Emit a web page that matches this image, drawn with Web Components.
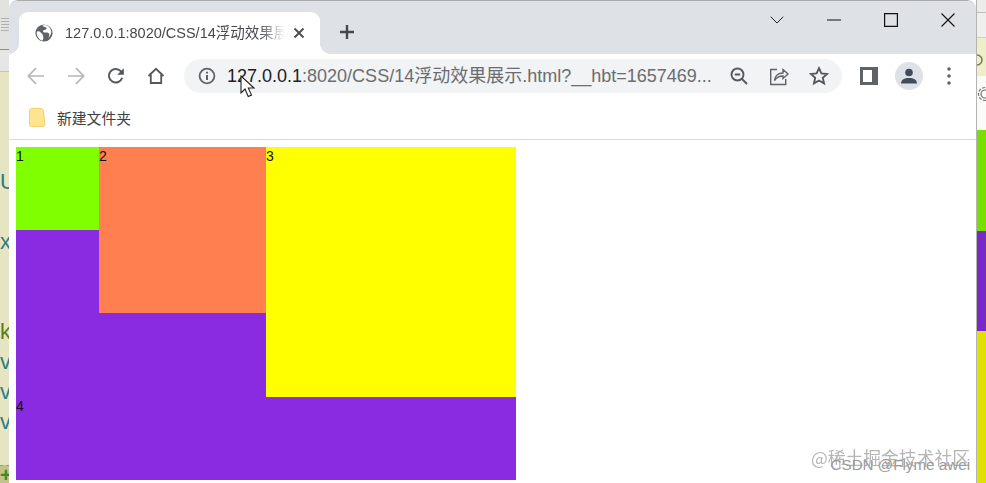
<!DOCTYPE html>
<html lang="zh">
<head>
<meta charset="utf-8">
<title>14浮动效果展示</title>
<style>
    html, body { margin: 0; padding: 0; background: #fff; overflow: hidden; }
    body { font-family: "Liberation Sans", "Noto Sans CJK SC", sans-serif; }
</style>
</head>
<body>

<desk-top>
    <side-strip slot="left"></side-strip>
    <browser-window slot="main">
        <tab-strip title-text="127.0.0.1:8020/CSS/14浮动效果展示"></tab-strip>
        <tool-bar host-text="127.0.0.1" rest-text=":8020/CSS/14浮动效果展示.html?__hbt=1657469..."></tool-bar>
        <bookmark-bar>新建文件夹</bookmark-bar>
        <page-view>
            <float-box style="--w:83px;--h:83px;--bg:#7fff00;float:left">1</float-box>
            <float-box style="--w:167px;--h:166px;--bg:#ff7f50;float:left">2</float-box>
            <float-box style="--w:250px;--h:250px;--bg:#ffff00;float:left">3</float-box>
            <float-box style="--w:500px;--h:333px;--bg:#8a2be2">4</float-box>
        </page-view>
    </browser-window>
    <other-window slot="right"></other-window>
    <water-mark slot="over"></water-mark>
</desk-top>

<template id="tpl-desk-top">
    <style>
        :host { display: block; position: relative; width: 986px; height: 483px; overflow: hidden; }
        .row { display: grid; grid-template-columns: 9px 967px 10px; height: 100%; }
    </style>
    <div class="row">
        <slot name="left"></slot>
        <slot name="main"></slot>
        <slot name="right"></slot>
    </div>
    <slot name="over"></slot>
</template>

<template id="tpl-side-strip">
    <style>
        :host { display: flex; flex-direction: column; height: 483px; overflow: hidden; background: #e5e5c3; }
        .head { height: 49px; background: #e2e2e0; border-bottom: 1px solid #8f8f8f; display: flex; justify-content: flex-end; align-items: center; }
        .sub { height: 21px; background: #e6e6e6; border-bottom: 1px solid #c4c4c4; }
        .code { flex: 1; padding-top: 95px; font: 22px/30px "Liberation Sans", sans-serif; color: #2d7d80; }
        .code div { height: 30px; white-space: pre; }
        .k { color: #5f7a10; }
        .foot { height: 17px; border-top: 1px dashed #9a9a80; background: #c2c28c; color: #3f8a1c; font: bold 20px/18px "Liberation Sans", sans-serif; text-align: right; overflow: hidden; }
        .lines { width: 8px; height: 14px; background: repeating-linear-gradient(#b0b0b0 0 1px, transparent 1px 3px); }
    </style>
    <div class="head"><div class="lines"></div></div>
    <div class="sub"></div>
    <div class="code">
        <div>U</div>
        <div> </div>
        <div>x</div>
        <div> </div>
        <div> </div>
        <div class="k">k</div>
        <div>v</div>
        <div>v</div>
        <div>v</div>
    </div>
    <div class="foot">+</div>
</template>

<template id="tpl-other-window">
    <style>
        :host { display: flex; flex-direction: column; height: 483px; overflow: hidden; background: #fff; border-left: 1px solid #b5b5b0; box-sizing: border-box; }
        .a { height: 12px; background: #ececec; border-bottom: 1px solid #bdbdbd; flex: none; }
        .b { height: 24px; background: #efefef; border-bottom: 1px solid #cfcfcf; flex: none; }
        .c { height: 38px; background: #eeeec8; flex: none; }
        .c svg { margin: 16px 0 0 -6px; }
        .d { height: 54px; background: #fbfbfb; flex: none; }
        .d svg { display: block; margin: 10px 0 0 0; }
        svg { display: block; }
        .green { height: 101px; background: #78e000; flex: none; }
        .purple { height: 100px; background: #7a28c8; flex: none; }
        .yellow { flex: 1; background: #e2e000; }
    </style>
    <div class="a"></div>
    <div class="b"></div>
    <div class="c">
        <svg width="12" height="12" viewBox="0 0 12 12" fill="none" stroke="#77775a" stroke-width="1.500"><circle cx="6" cy="6" r="5"/></svg>
    </div>
    <div class="d">
        <svg width="16" height="16" viewBox="0 0 16 16" fill="none" stroke="#777" stroke-width="1.200"><circle cx="8" cy="8" r="4"/><circle cx="8" cy="8" r="6.500" stroke-dasharray="3 1.500"/></svg>
    </div>
    <div class="green"></div>
    <div class="purple"></div>
    <div class="yellow"></div>
</template>

<template id="tpl-browser-window">
    <style>
        :host {
            display: flex; flex-direction: column; height: 483px; overflow: hidden;
            background: #fff; border-radius: 9px 9px 0 0; box-sizing: border-box;
            border-top: 1px solid #a9abae;
        }
    </style>
    <slot></slot>
</template>

<template id="tpl-tab-strip">
    <style>
        :host { display: flex; height: 53px; flex: none; background: #dee1e6; padding-left: 10px; box-sizing: border-box; color: #45484d; }
        .tab {
            position: relative; width: 301px; height: 42px; margin-top: 11px; background: #fff;
            border-radius: 9px 9px 0 0; display: flex; align-items: center; box-sizing: border-box;
            padding: 0 0 0 16px;
        }
        .tab::before, .tab::after { content: ""; position: absolute; bottom: 0; width: 10px; height: 10px; }
        .tab::before { left: -10px; background: radial-gradient(circle at 0 0, transparent 9.500px, #fff 10px); }
        .tab::after { right: -10px; background: radial-gradient(circle at 100% 0, transparent 9.500px, #fff 10px); }
        .title {
            margin-left: 12px; width: 220px; overflow: hidden; white-space: nowrap; font-size: 14.500px; line-height: 20px;
            -webkit-mask-image: linear-gradient(90deg, #000 88%, transparent 100%);
        }
        .x { margin-left: 7px; display: block; }
        .plus { margin: 17px 0 0 13px; width: 28px; height: 28px; display: block; flex: none; }
        .controls { margin-left: auto; display: flex; }
        .controls span { width: 57px; height: 38px; display: flex; align-items: center; justify-content: center; }
        svg { display: block; flex: none; }
    </style>
    <div class="tab">
        <svg width="18" height="18" viewBox="0 0 18 18"><circle cx="9" cy="9" r="8.600" fill="#5f6368"/><path d="M2.200 7.400c1.600-.4 3 .2 3.700 1.400.6 1 1.900 1 1.900 2.200 0 1 .8 1.600.6 3.200-.1.900-.6 1.900-1.200 2.500C4 15.600 1.400 12 1.700 8.500zM7.500 1.700c1.300.5 1.700 1.400 3 1.500 1.200.1 1.500 1.400.5 2.100-1 .8-2.400.4-2.900 1.600-.3 1 1 1.700 2.300 1.600 1.600-.1 3.300.2 3.800 1.400.4 1-.3 2.700-1.200 4.100 2.400-1.500 3.500-4.300 3.200-6.900-.4-3.300-3-5.700-6-6.200-1-.1-1.800 0-2.700.8z" fill="#fff"/></svg>
        <span class="title" id="title"></span>
        <svg class="x" width="14" height="14" viewBox="0 0 14 14" fill="none" stroke="#4b4e53" stroke-width="1.900"><path d="M2.500 2.500l9 9M11.500 2.500l-9 9"/></svg>
    </div>
    <svg class="plus" viewBox="0 0 28 28" fill="none" stroke="#45484d" stroke-width="2.400"><path d="M14 7v14M7 14h14"/></svg>
    <div class="controls">
        <span><svg width="14" height="8" viewBox="0 0 14 8" fill="none" stroke="#222" stroke-width="1"><path d="M.7.700L7 7l6.300-6.300"/></svg></span>
        <span><svg width="14" height="2" viewBox="0 0 14 2" stroke="#111" stroke-width="1.200"><path d="M0 1h14"/></svg></span>
        <span><svg width="14" height="14" viewBox="0 0 14 14" fill="none" stroke="#111" stroke-width="1.200"><path d="M.6.600h12.800v12.800H.6z"/></svg></span>
        <span><svg width="14" height="14" viewBox="0 0 14 14" fill="none" stroke="#111" stroke-width="1.100"><path d="M.5.500l13 13M13.500.5l-13 13"/></svg></span>
    </div>
</template>

<template id="tpl-tool-bar">
    <style>
        :host { display: flex; flex: none; height: 46px; padding: 5px 7px 0; box-sizing: border-box; background: #fff; align-items: flex-start; }
        .btn { width: 40px; height: 34px; display: flex; align-items: center; justify-content: center; flex: none; }
        svg { display: block; flex: none; }
        .omni {
            position: relative; flex: none; width: 658px; height: 34px; margin-left: 8px; background: #f1f3f4; border-radius: 17px;
            display: flex; align-items: center; padding-left: 14px; box-sizing: border-box;
        }
        .url { margin-left: 11px; width: 500px; overflow: hidden; white-space: nowrap; font-size: 18px; line-height: 22px; color: #6a6d71; }
        .url b { font-weight: normal; color: #202124; }
        .tail { margin-left: auto; display: flex; padding-right: 3px; }
        .tail span { width: 40px; height: 34px; display: flex; align-items: center; justify-content: center; }
        .cursor { position: absolute; left: 56px; top: 16px; }
        .after { display: flex; margin-left: 7px; }
        .avatar { width: 28px; height: 28px; border-radius: 50%; background: #dee1e6; display: flex; align-items: center; justify-content: center; }
    </style>
    <span class="btn"><svg width="18" height="18" viewBox="0 0 18 18" fill="none" stroke="#b4b7bb" stroke-width="1.700"><path d="M17 9H1.500M9 1.200L1.300 9 9 16.800"/></svg></span>
    <span class="btn"><svg width="18" height="18" viewBox="0 0 18 18" fill="none" stroke="#b4b7bb" stroke-width="1.700"><path d="M1 9h15.500M9 1.200L16.700 9 9 16.800"/></svg></span>
    <span class="btn"><svg width="18" height="18" viewBox="0 0 18 18" fill="none" stroke="#55585d" stroke-width="2"><path d="M15.200 10.800A6.800 6.800 0 1 1 13.800 4.200L16 6.500"/><path d="M16.800 1.200v6.600h-6.600" stroke="none" fill="#55585d"/></svg></span>
    <span class="btn"><svg width="18" height="18" viewBox="0 0 18 18" fill="none" stroke="#55585d" stroke-width="1.800"><path d="M1.500 9L9 1.800 16.500 9M3.800 7.200V16h10.400V7.200"/></svg></span>
    <div class="omni">
        <svg width="18" height="18" viewBox="0 0 18 18" fill="none" stroke="#5f6368" stroke-width="1.800"><circle cx="9" cy="9" r="7.400"/><path d="M9 8v5M9 4.800v1.700" stroke-width="2"/></svg>
        <span class="url"><b id="host"></b><span id="rest"></span></span>
        <div class="tail">
            <span><svg width="20" height="20" viewBox="0 0 20 20" fill="none" stroke="#55585d" stroke-width="1.900"><circle cx="8.500" cy="8.500" r="6"/><path d="M13 13l5 5M5.800 8.500h5.400"/></svg></span>
            <span><svg width="20" height="20" viewBox="0 0 20 20" fill="none" stroke="#5f6368" stroke-width="1.400"><path d="M8 3.500H1.700v15h15V13"/><path d="M5.500 14.500c.4-4.500 3.700-7.500 8.500-7.500V3.500L19 8l-5 4.500V10c-3.500 0-6.500 1.500-8.500 4.500z"/></svg></span>
            <span><svg width="20" height="20" viewBox="0 0 20 20" fill="none" stroke="#55585d" stroke-width="1.900"><path d="M10 2.200l2.400 5.200 5.700.6-4.300 3.800 1.200 5.600-5-2.900-5 2.900 1.200-5.600L1.900 8l5.700-.6z"/></svg></span>
        </div>
        <svg class="cursor" width="16" height="23" viewBox="0 0 16 23"><path d="M1 1v17l4-4 3.200 7.500 3.300-1.400L8.300 13H14z" fill="#fff" stroke="#222" stroke-width="1.100"/></svg>
    </div>
    <div class="after">
        <span class="btn"><svg width="18" height="18" viewBox="0 0 18 18"><path d="M0 0h18v18H0z" fill="#5f6368"/><path d="M3 3h9v12H3z" fill="#fff"/></svg></span>
        <span class="btn"><span class="avatar"><svg width="16" height="16" viewBox="0 0 16 16" fill="#414b5c"><circle cx="8" cy="4.500" r="3.800"/><path d="M0 15.500c0-3.800 3.600-5.500 8-5.500s8 1.700 8 5.500z"/></svg></span></span>
        <span class="btn"><svg width="4" height="18" viewBox="0 0 4 18" fill="#5f6368"><circle cx="2" cy="2" r="1.800"/><circle cx="2" cy="9" r="1.800"/><circle cx="2" cy="16" r="1.800"/></svg></span>
    </div>
</template>

<template id="tpl-bookmark-bar">
    <style>
        :host {
            display: flex; flex: none; height: 40px; padding: 0 0 5px 20px; box-sizing: border-box; align-items: center;
            background: #fff; border-bottom: 1px solid #dadce0; font-size: 14.800px; color: #3c4043;
        }
        svg { display: block; margin-right: 11px; }
    </style>
    <svg width="17" height="19" viewBox="0 0 17 19"><path d="M2.500.5h9.500c1.400 0 2 .8 2.300 2L16 16.500c0 1.300-.8 2-2 2H2.500C1.300 18.500.5 17.700.5 16.500v-14C.5 1.300 1.300.5 2.500.5z" fill="#fde48f" stroke="#f3cf73" stroke-width="1"/></svg>
    <slot></slot>
</template>

<template id="tpl-page-view">
    <style>
        :host { display: block; flex: 1; padding: 7px; background: #fff; font: 14px/19px "Liberation Sans", sans-serif; color: #111; }
        .wrap { width: 500px; }
    </style>
    <div class="wrap"><slot></slot></div>
</template>

<template id="tpl-float-box">
    <style>
        :host { display: block; width: var(--w); height: var(--h); background: var(--bg); }
    </style>
    <slot></slot>
</template>

<template id="tpl-water-mark">
    <style>
        :host { position: absolute; right: 16px; top: 445px; width: 170px; height: 34px; color: #a9a9a9; }
        .a { position: absolute; right: 0; top: 0; font: 17.800px/24px "Noto Sans CJK SC", sans-serif; white-space: nowrap; opacity: .85; }
        .b { position: absolute; right: 0; top: 9px; font: 15.200px/22px "Liberation Sans", sans-serif; white-space: nowrap; color: #9a9a9a; }
    </style>
    <div class="a">@稀土掘金技术社区</div>
    <div class="b">CSDN @Flyme awei</div>
</template>

<script>
    // every element just clones its own template into an open shadow root
    class BaseEl extends HTMLElement {
        constructor() {
            super();
            const tpl = document.getElementById('tpl-' + this.constructor.tag);
            this._root = this.attachShadow({mode: 'open'});
            this._root.appendChild(tpl.content.cloneNode(true));
        }
    }

    class TabStrip extends BaseEl {
        static get tag() { return 'tab-strip'; }
        connectedCallback() {
            this._root.querySelector('#title').textContent = this.getAttribute('title-text');
        }
    }

    class ToolBar extends BaseEl {
        static get tag() { return 'tool-bar'; }
        connectedCallback() {
            this._root.querySelector('#host').textContent = this.getAttribute('host-text');
            this._root.querySelector('#rest').textContent = this.getAttribute('rest-text');
        }
    }

    customElements.define('tab-strip', TabStrip);
    customElements.define('tool-bar', ToolBar);

    ['desk-top', 'side-strip', 'other-window', 'browser-window', 'bookmark-bar', 'page-view', 'float-box', 'water-mark'].forEach((tag) => {
        customElements.define(tag, class extends BaseEl {
            static get tag() { return tag; }
        });
    });
</script>
</body>
</html>
